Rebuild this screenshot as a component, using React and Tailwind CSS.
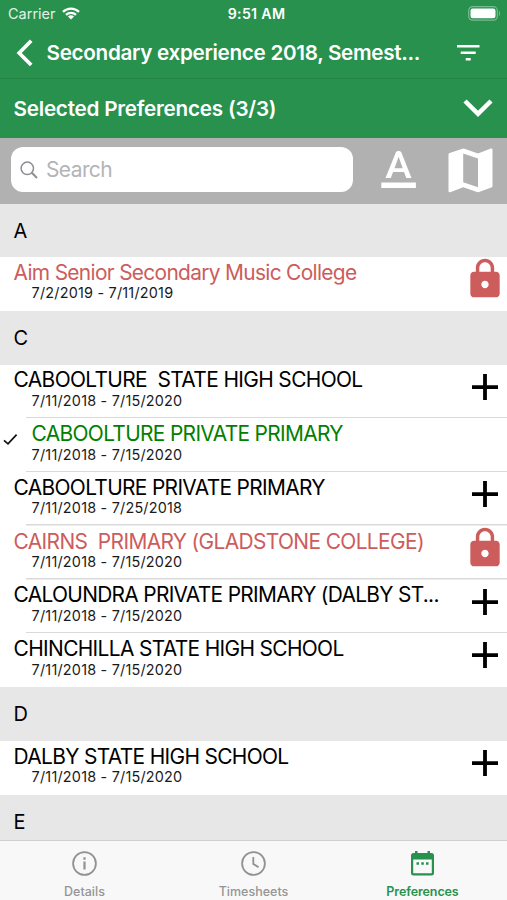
import { Fragment } from "react";

const LockIcon = () => (
  <svg className="h-[44px] w-[44px]" viewBox="0 0 24 24" preserveAspectRatio="none" fill="#cd5c5c">
    <path d="M18 8h-1V6c0-2.76-2.24-5-5-5S7 3.24 7 6v2H6c-1.1 0-2 .9-2 2v10c0 1.1.9 2 2 2h12c1.1 0 2-.9 2-2V10c0-1.1-.9-2-2-2zm-6 9c-1.1 0-2-.9-2-2s.9-2 2-2 2 .9 2 2-.9 2-2 2zm3.1-9H8.9V6c0-1.71 1.39-3.1 3.1-3.1 1.71 0 3.1 1.39 3.1 3.1v2z" />
  </svg>
);

const PlusIcon = () => (
  <svg className="h-[44px] w-[44px]" viewBox="0 0 44 44" fill="#000">
    <path d="M9 20.3h11.1V9.1h3.8v11.2H35v3.6H23.9V35h-3.8V23.9H9z" />
  </svg>
);

const sections = [
  {
    letter: "A",
    rows: [
      { name: "Aim Senior Secondary Music College", dates: "7/2/2019 - 7/11/2019", state: "locked", fit: "tracking-[-0.68px]" },
    ],
  },
  {
    letter: "C",
    rows: [
      { name: "CABOOLTURE  STATE HIGH SCHOOL", dates: "7/11/2018 - 7/15/2020", state: "open", fit: "tracking-[-0.63px]" },
      { name: "CABOOLTURE PRIVATE PRIMARY", dates: "7/11/2018 - 7/15/2020", state: "chosen", fit: "tracking-[-0.66px]" },
      { name: "CABOOLTURE PRIVATE PRIMARY", dates: "7/11/2018 - 7/25/2018", state: "open", fit: "tracking-[-0.66px]" },
      { name: "CAIRNS  PRIMARY (GLADSTONE COLLEGE)", dates: "7/11/2018 - 7/15/2020", state: "locked", fit: "tracking-[-0.62px]" },
      { name: "CALOUNDRA PRIVATE PRIMARY (DALBY ST...", dates: "7/11/2018 - 7/15/2020", state: "open", fit: "tracking-[-0.69px]" },
      { name: "CHINCHILLA STATE HIGH SCHOOL", dates: "7/11/2018 - 7/15/2020", state: "open", fit: "tracking-[-0.65px]" },
    ],
  },
  {
    letter: "D",
    rows: [
      { name: "DALBY STATE HIGH SCHOOL", dates: "7/11/2018 - 7/15/2020", state: "open", fit: "tracking-[-0.66px]" },
    ],
  },
  { letter: "E", rows: [] },
];

const nameColor = { locked: "text-[#cd5c5c]", open: "text-black", chosen: "text-[#008000]" };

function Row({ row, last }) {
  return (
    <div className={`flex h-[53.75px] shrink-0 bg-white ${last ? "" : "bg-[linear-gradient(#d9d9d9,#d9d9d9)] bg-[length:calc(100%-25.5px)_1.5px] bg-right-bottom bg-no-repeat"}`}>
      <div className="w-[13.6px] shrink-0 pt-[14px]">
        {row.state === "chosen" && (
          <svg className="ml-[3px] h-[14px] w-[15px]" viewBox="0 0 15 14" fill="none" stroke="#111" strokeWidth="1.7">
            <path d="M1 8.3l4 3.6L13.6 2.6" />
          </svg>
        )}
      </div>
      <div className="min-w-0 flex-1 pt-[2.8px]">
        <div className={`whitespace-pre text-[20.9px] leading-[25px] ${row.state === "chosen" ? "pl-[18px]" : ""} ${nameColor[row.state]} ${row.fit}`}>{row.name}</div>
        <div className="-mt-[0.5px] whitespace-pre pl-[18px] text-[14.4px] leading-[17px] tracking-[0.21px] text-[#1a1a1a]">{row.dates}</div>
      </div>
      <div className="w-[44px] shrink-0">
        {row.state === "locked" && <LockIcon />}
        {row.state === "open" && <PlusIcon />}
      </div>
    </div>
  );
}

export default function App() {
  return (
    <div className="flex h-[900px] w-[507px] flex-col overflow-hidden bg-white font-['Inter',sans-serif]">
      <header className="flex h-[138px] shrink-0 flex-col bg-[#27914d] text-white">
        <div className="flex h-[27px] items-center">
          <div className="flex w-[200px] items-center pl-[8px]">
            <span className="text-[14.5px] leading-[18px] text-[#e2f1e7]">Carrier</span>
            <svg className="ml-[6px] h-[13px] w-[18px]" viewBox="0 0 18 13" fill="none" stroke="#fff" strokeWidth="2.3">
              <path d="M1 4.8a11.6 11.6 0 0 1 16 0M4 7.9a7.3 7.3 0 0 1 10 0" />
              <path d="M9 12.6L5.9 9.6a4.5 4.5 0 0 1 6.2 0z" fill="#fff" stroke="none" />
            </svg>
          </div>
          <div className="w-[113px] text-center text-[14.2px] font-semibold leading-[18px] tracking-[0.3px]">9:51 AM</div>
          <svg className="ml-[155px] h-[15px] w-[33px]" viewBox="0 0 33 15">
            <rect x="0.7" y="0.7" width="28.6" height="13.4" rx="3.8" fill="none" stroke="#79bb90" strokeWidth="1.2" />
            <rect x="2.5" y="2.5" width="25" height="9.8" rx="2.2" fill="#fff" />
            <path d="M31 5v5c1.3-.5 1.3-4.5 0-5z" fill="#79bb90" />
          </svg>
        </div>
        <div className="flex h-[51px] items-center">
          <svg className="ml-[15.5px] h-[28px] w-[18px]" viewBox="0 0 18 28" fill="none" stroke="#fff" strokeWidth="3.7">
            <path d="M15.2 1.8L3.2 14 15.2 26" />
          </svg>
          <div className="ml-[13px] w-[390px] whitespace-nowrap text-[20.7px] font-semibold leading-[26px] tracking-[-0.32px]">Secondary experience 2018, Semest...</div>
          <svg className="ml-[20px] h-[16px] w-[23px]" viewBox="0 0 23 16" fill="#fff">
            <path d="M0 0h22.5v2.5H0zM3.7 6.6h15v2.5h-15zM8.7 13.1h5v2.5h-5z" />
          </svg>
        </div>
        <div className="flex h-[60px] items-center justify-between border-t border-[#218344] pl-[13.5px] pr-[14px]">
          <div className="whitespace-nowrap text-[20.7px] font-semibold leading-[26px] tracking-[-0.24px]">Selected Preferences (3/3)</div>
          <svg className="-mt-[2px] h-[18px] w-[30px]" viewBox="0 0 30 18" fill="none" stroke="#fff" strokeWidth="4.5">
            <path d="M2 2l13 12.8L28 2" />
          </svg>
        </div>
      </header>

      <div className="flex h-[65.5px] shrink-0 bg-[#b1b1b1] pl-[11px] pt-[9px]">
        <div className="flex h-[45px] w-[342px] items-center rounded-[12px] bg-white pl-[9px]">
          <svg className="h-[18px] w-[18px]" viewBox="0 0 18 18" fill="none" stroke="#8e8e93">
            <circle cx="7.3" cy="7.3" r="6.2" strokeWidth="1.5" />
            <path d="M11.8 11.8L17 17" strokeWidth="2" />
          </svg>
          <span className="ml-[8px] text-[21px] leading-[26px] tracking-[-0.6px] text-[#b4b4b6]">Search</span>
        </div>
        <svg className="ml-[23px] mt-[1px] h-[44px] w-[44px]" viewBox="0 0 44 44" fill="#fff">
          <path d="M5.3 34.5h34.6v5.4H5.3zM9.5 30L19.8 4.5q.6-1.5 2-1.5h1.6q1.4 0 2 1.5L35.500 30h-5.200l-2.300-5.900H17.100L14.800 30zM18.500 20.200h8.200L22.600 8.800z" />
        </svg>
        <svg className="ml-[27.5px] mt-[1px] h-[45px] w-[45px]" viewBox="0 0 45 45" fill="#fff" fillRule="evenodd">
          <path d="M1.7 5L14.5.7Q15.5.3 16.5.7L30 5.4 42.8.5Q44.5 0 44.5 1.8V38q0 1.2-1.2 1.6L31 44q-1 .3-2 0L15.2 39.2 2.2 44.2Q.5 44.7.5 43V6.5Q.5 5.4 1.7 5zM15.2 5.5V34.3L30 39.2V10.6z" />
        </svg>
      </div>

      <main className="flex min-h-0 flex-1 flex-col overflow-hidden">
        {sections.map((s) => (
          <Fragment key={s.letter}>
            <div className="flex h-[53.7px] shrink-0 items-center bg-[#e7e7e7] pl-[13.6px] pt-[0.6px] text-[20px] leading-[24px] text-black">{s.letter}</div>
            {s.rows.map((r, i) => (
              <Row key={i} row={r} last={i === s.rows.length - 1} />
            ))}
          </Fragment>
        ))}
      </main>

      <nav className="grid h-[60px] shrink-0 grid-cols-3 border-t border-[#d0d0d0] bg-[#f8f8f8] text-[12.5px] font-medium leading-[16px] text-[#959595]">
        <div className="flex flex-col items-center pt-[10px]">
          <svg className="h-[25px] w-[25px]" viewBox="0 0 25 25" fill="none" stroke="#929292" strokeWidth="1.8">
            <circle cx="12.5" cy="12.5" r="11.4" />
            <path d="M12.5 10.5v8M12.5 6.3v2.4" strokeWidth="2.2" />
          </svg>
          <span className="mt-[8px]">Details</span>
        </div>
        <div className="flex flex-col items-center pt-[10px]">
          <svg className="h-[25px] w-[25px]" viewBox="0 0 25 25" fill="none" stroke="#929292" strokeWidth="1.8">
            <circle cx="12.5" cy="12.5" r="11.4" />
            <path d="M12.3 6v7l5.3 3.2" />
          </svg>
          <span className="mt-[8px]">Timesheets</span>
        </div>
        <div className="flex flex-col items-center pt-[10px] text-[#27914d]">
          <svg className="h-[25px] w-[23px]" viewBox="0 0 23 25" fill="#27914d" fillRule="evenodd">
            <path d="M4 0h2.5v2h10V0H19v2h1.5Q23 2 23 4.5V22q0 2.5-2.5 2.5h-18Q0 24.5 0 22V4.5Q0 2 2.5 2H4zM2.2 8.5V22.3H20.8V8.5zM5.5 11.2H8v2.5H5.5zM10.3 11.2h2.5v2.5h-2.5zM15 11.2h2.5v2.5H15z" />
          </svg>
          <span className="mt-[8px] font-semibold tracking-[-0.1px]">Preferences</span>
        </div>
      </nav>
    </div>
  );
}
